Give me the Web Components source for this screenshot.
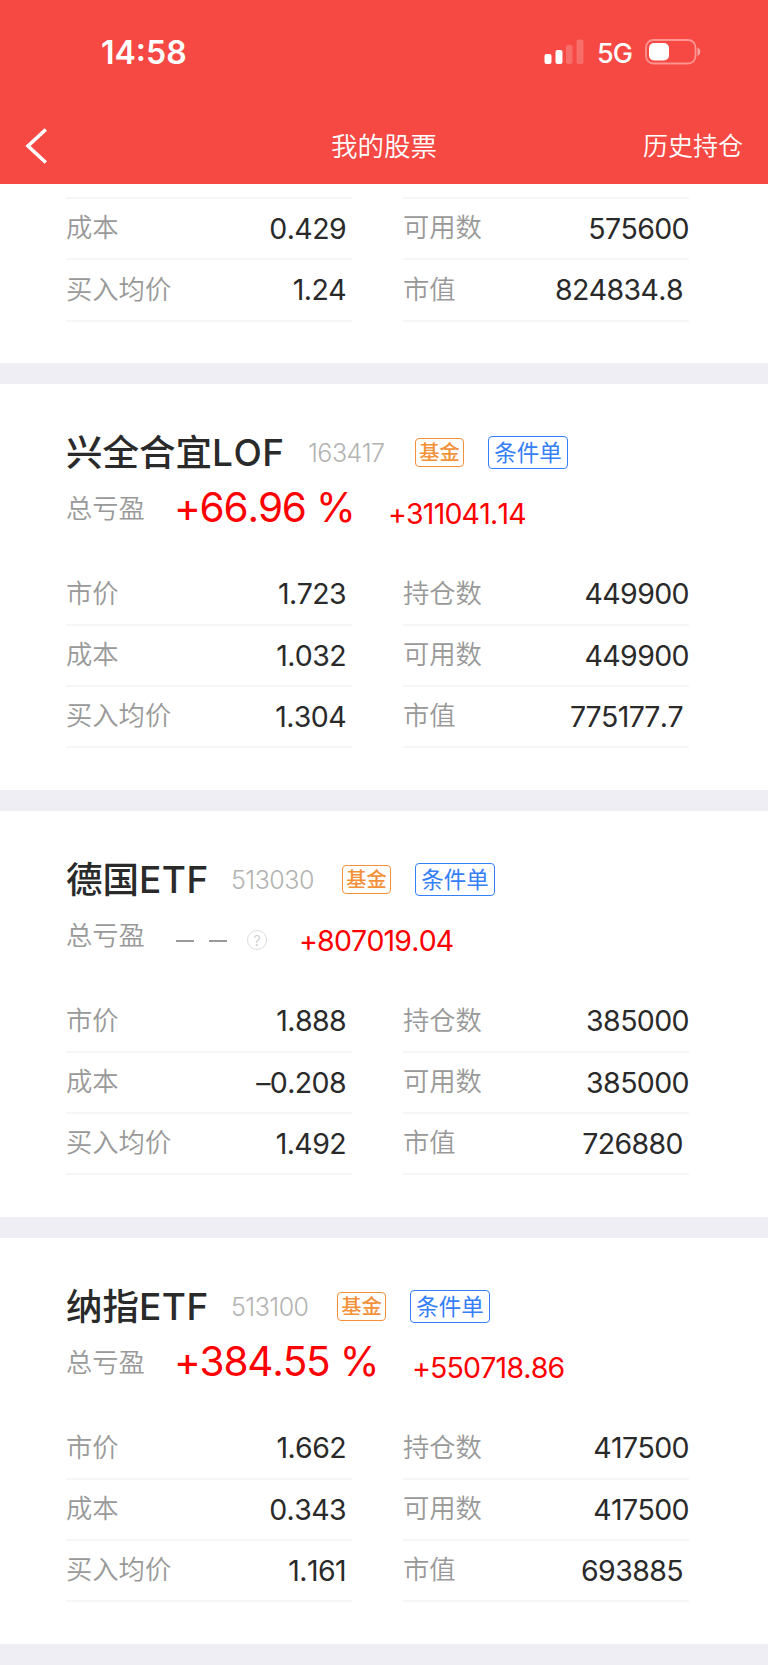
<!DOCTYPE html>
<html lang="zh-CN">
<head>
<meta charset="utf-8">
<meta name="viewport" content="width=device-width, initial-scale=1">
<title>我的股票</title>
<style>
  :root {
    --red: #f64944;
    --rise: #fe0000;
    --ink: #2a2a2a;
    --label: #999;
    --muted: #b3b3b3;
    --line: #f6f6f6;
    --band: #efeef4;
    --orange: #f3913a;
    --blue: #3580f8;
  }

  body {
    margin: 0;
    background: var(--band);
    font-family: Inter, "Noto Sans CJK SC", sans-serif;
    font-kerning: none;
  }
</style>
</head>
<body>
<stock-page></stock-page>

<script>
const define = (name, template) => {
  customElements.define(name, class extends HTMLElement {
    constructor() {
      super()

      this.attachShadow({ mode: 'open' })
    }

    connectedCallback() {
      this.shadowRoot.innerHTML = template(this)
    }
  })
}

define('status-bar', () => /*html*/ `
<style>
  :host {
    display: flex;
    align-items: flex-start;
    justify-content: space-between;
    height: 108px;
    padding: 0 66px 0 101px;
    box-sizing: border-box;
    color: #fff;
  }

  .time {
    margin-top: 33px;
    font-size: 32px;
    font-weight: 600;
    line-height: 40px;
  }

  .signals {
    display: flex;
    margin-top: 38px;
  }

  .net {
    width: 36px;
    margin: 1px 12px 0 13px;
    font-size: 27px;
    font-weight: 500;
    line-height: 30px;
    letter-spacing: -1px;
    white-space: nowrap;
  }

  svg {
    display: block;
  }
</style>
<span class="time">14:58</span>
<div class="signals">
  <svg width="40" height="28" viewBox="0 0 40 28" fill="#fff">
    <rect x="0.500" y="16" width="7" height="10" rx="2"/>
    <rect x="11.500" y="12" width="7" height="14" rx="2"/>
    <rect x="22" y="7" width="6.500" height="19" rx="2" opacity=".2"/>
    <rect x="32.500" y="1.500" width="7" height="24.500" rx="2" opacity=".2"/>
  </svg>
  <span class="net">5G</span>
  <svg width="57" height="28" viewBox="0 0 57 28">
    <rect x="1" y="2" width="49.500" height="23.500" rx="7.500" fill="none" stroke="#fff" stroke-opacity=".42" stroke-width="1.800"/>
    <rect x="4" y="5" width="20" height="17.500" rx="5" fill="#fff"/>
    <path d="M52.500 9.500c3.700 1.500 3.700 7 0 8.500z" fill="#fff" opacity=".5"/>
  </svg>
</div>
`)

define('nav-bar', el => /*html*/ `
<style>
  :host {
    display: grid;
    grid-template-columns: 1fr auto 1fr;
    align-items: center;
    height: 76px;
    padding: 0 25px;
    color: #fff;
    font-size: 26.500px;
    font-weight: 350;
    line-height: 40px;
  }

  svg {
    display: block;
  }

  .action {
    justify-self: end;
    font-size: 25px;
  }
</style>
<svg width="24" height="36" viewBox="0 0 24 36" fill="none" stroke="#fff" stroke-width="3.600">
  <path d="M20.800 1.500 3 18 20.800 34.500"/>
</svg>
<span class="title"><slot></slot></span>
<span class="action">${el.getAttribute('action')}</span>
`)

define('data-row', el => /*html*/ `
<style>
  :host {
    display: flex;
    justify-content: space-between;
    height: 61.400px;
    box-sizing: border-box;
    border-bottom: 2px solid var(--line);
    white-space: nowrap;
  }

  .label {
    padding-top: 9.300px;
    color: var(--label);
    font-size: 26.300px;
    font-weight: 350;
    line-height: 40px;
  }

  .value {
    padding: 10px ${el.getAttribute('inset')}px 0 0;
    color: var(--ink);
    font-size: 28.500px;
    line-height: 40px;
    letter-spacing: -.6px;
  }
</style>
<span class="label">${el.getAttribute('label')}</span>
<span class="value"><slot></slot></span>
`)

define('tag-badge', () => /*html*/ `
<style>
  :host {
    display: block;
    box-sizing: border-box;
    width: 49px;
    height: 29px;
    border: 1.500px solid var(--orange);
    border-radius: 4px;
    color: var(--orange);
    font-size: 20.300px;
    font-weight: 500;
    line-height: 27px;
    text-align: center;
    white-space: nowrap;
  }

  :host([kind="order"]) {
    width: 80px;
    height: 33px;
    border-color: var(--blue);
    color: var(--blue);
    font-size: 22.500px;
    font-weight: 400;
    line-height: 31px;
  }
</style>
<slot></slot>
`)

define('help-icon', () => /*html*/ `
<style>
  :host {
    display: flex;
    align-items: center;
    justify-content: center;
    box-sizing: border-box;
    width: 20px;
    height: 20px;
    border: 1.500px solid #dcdcdc;
    border-radius: 50%;
    color: #cfcfcf;
    font-size: 14px;
  }
</style>?
`)

// bottom edge of the rows scrolled under the nav bar
define('row-lines', () => /*html*/ `
<style>
  :host {
    display: grid;
    grid-template-columns: 286px 286px;
    column-gap: 51px;
    height: 2px;
  }

  i {
    background: var(--line);
  }
</style>
<i></i><i></i>
`)

define('stock-card', () => /*html*/ `
<style>
  :host {
    display: block;
    height: 406px;
    padding: 49px 79px 0 66px;
    margin-bottom: 21px;
    box-sizing: border-box;
    background: #fff;
  }

  :host([partial]) {
    height: 179px;
    padding-top: 13px;
  }

  .data {
    display: grid;
    grid-template-columns: 286px 286px;
    column-gap: 51px;
  }
</style>
<slot name="head"></slot>
<div class="data"><slot></slot></div>
`)

define('stock-head', el => {
  const a = name => el.getAttribute(name)
  const rate = a('rate')
  return /*html*/ `
<style>
  :host {
    display: block;
    height: 131.300px;
    white-space: nowrap;
  }

  .title, .profit {
    display: flex;
  }

  .title {
    align-items: center;
    height: 40px;
  }

  .name {
    width: ${a('name-width')}px;
    color: var(--ink);
    font-size: 36.500px;
    font-weight: 500;
    line-height: 40px;
  }

  .latin {
    font-size: 37px;
    letter-spacing: .5px;
  }

  .code {
    width: ${a('code-width')}px;
    color: var(--muted);
    font-size: 25px;
    font-weight: 300;
    line-height: 40px;
    letter-spacing: -.5px;
  }

  tag-badge {
    margin-bottom: 2px;
  }

  tag-badge + tag-badge {
    margin-left: 24px;
  }

  .label {
    width: 108px;
    padding-top: 16px;
    color: var(--label);
    font-size: 26.300px;
    font-weight: 350;
    line-height: 40px;
  }

  .rate {
    width: ${a('rate-width')}px;
    padding-top: 15px;
    color: var(--rise);
    font-size: 40.500px;
    line-height: 40px;
    letter-spacing: -1.200px;
  }

  .none {
    display: flex;
    align-items: center;
    width: ${a('rate-width')}px;
    height: 40px;
    padding-top: 20px;
  }

  .none i {
    width: 18px;
    height: 2px;
    margin: 2px 14px 0 1.500px;
    background: var(--label);
  }

  help-icon {
    margin-left: 6px;
  }

  .amount {
    padding-top: 21px;
    color: var(--rise);
    font-size: 28.500px;
    line-height: 40px;
    letter-spacing: -.8px;
  }
</style>
<div class="title">
  <span class="name">${a('name').replace(/[A-Z]+/, '<span class="latin">$&</span>')}</span>
  <span class="code">${a('code')}</span>
  <tag-badge>基金</tag-badge>
  <tag-badge kind="order">条件单</tag-badge>
</div>
<div class="profit">
  <span class="label">总亏盈</span>
  ${rate ? `<span class="rate">${rate}</span>` : '<span class="none"><i></i><i></i><help-icon></help-icon></span>'}
  <span class="amount">${a('amount')}</span>
</div>
`
})

const stocks = [
  {
    rows: [['成本', '0.429'], ['可用数', '575600'], ['买入均价', '1.24'], ['市值', '824834.8']]
  },
  {
    head: { name: '兴全合宜LOF', code: '163417', rate: '+66.96 %', amount: '+311041.14', 'name-width': 242, 'code-width': 107, 'rate-width': 214 },
    rows: [['市价', '1.723'], ['持仓数', '449900'], ['成本', '1.032'], ['可用数', '449900'], ['买入均价', '1.304'], ['市值', '775177.7']]
  },
  {
    head: { name: '德国ETF', code: '513030', amount: '+807019.04', 'name-width': 165, 'code-width': 111, 'rate-width': 125 },
    rows: [['市价', '1.888'], ['持仓数', '385000'], ['成本', '–0.208'], ['可用数', '385000'], ['买入均价', '1.492'], ['市值', '726880']]
  },
  {
    head: { name: '纳指ETF', code: '513100', rate: '+384.55 %', amount: '+550718.86', 'name-width': 165, 'code-width': 106, 'rate-width': 238 },
    rows: [['市价', '1.662'], ['持仓数', '417500'], ['成本', '0.343'], ['可用数', '417500'], ['买入均价', '1.161'], ['市值', '693885']]
  }
]

const inset = (label, i) => i % 2 === 0 || label === '市值' ? 6 : 0

const card = ({ head, rows }) => /*html*/ `
<stock-card ${head ? '' : 'partial'}>
  ${head ? `<stock-head slot="head" ${Object.entries(head).map(([k, v]) => `${k}="${v}"`).join(' ')}></stock-head>` : '<row-lines slot="head"></row-lines>'}
  ${rows.map(([label, value], i) => `<data-row label="${label}" inset="${inset(label, i)}">${value}</data-row>`).join('')}
</stock-card>
`

define('stock-page', () => /*html*/ `
<style>
  :host {
    display: block;
    height: 1665px;
    overflow: hidden;
  }

  header {
    background: var(--red);
  }
</style>
<header>
  <status-bar></status-bar>
  <nav-bar action="历史持仓">我的股票</nav-bar>
</header>
<main>${stocks.map(card).join('')}</main>
`)
</script>
</body>
</html>
